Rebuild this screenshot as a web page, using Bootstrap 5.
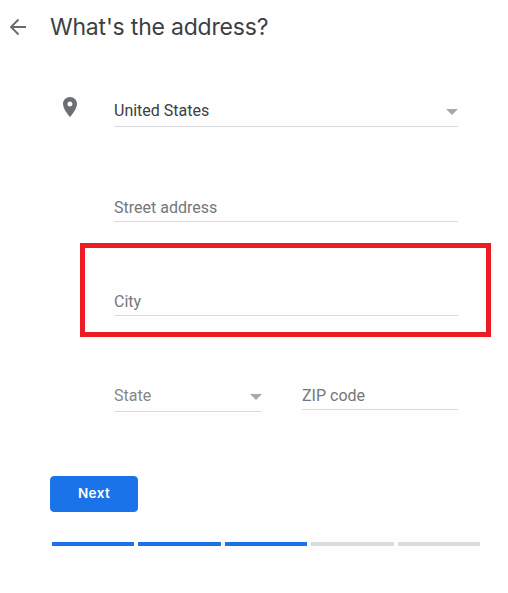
<!DOCTYPE html>
<html lang="en">

<head>
  <meta charset="UTF-8" />
  <title>What's the address?</title>
  <meta name="viewport" content="width=device-width, initial-scale=1" />
  <link href="https://cdn.jsdelivr.net/npm/bootstrap@5.3.0/dist/css/bootstrap.min.css" rel="stylesheet" />

  <style>
    body {
      background-color: #fefefe;
      font-family: Roboto, sans-serif;
      font-size: 16px;
      color: #3c4043;
    }

    .page-header {
      height: 54px;
      padding-left: 6px;
      gap: 20px;
    }

    .page-title {
      font-family: Inter, sans-serif;
      font-size: 23px;
      font-weight: 400;
      line-height: 32px;
      letter-spacing: -0.2px;
      color: #3c4043;
    }

    .address {
      padding: 44px 50px 0 58px;
      gap: 32px;
    }

    .pin {
      margin-top: -3px;
    }

    .field {
      padding-top: 1px;
      border-bottom: 1px solid #dadce0;
      line-height: 24px;
      color: #75777b;
    }

    .text-field {
      padding-bottom: 1px;
      cursor: text;
    }

    .select-field {
      padding-bottom: 3px;
      cursor: pointer;
    }

    .chosen {
      color: #3c4043;
    }

    .unset {
      color: #85878a;
    }

    .arrow-down {
      margin-top: 2px;
      border: 6px solid transparent;
      border-top-color: #a8a8a8;
      border-bottom: 0;
    }

    .street {
      margin-top: 68px;
    }

    .city {
      margin-top: 67px;
    }

    /* red frame around the city field */
    .city::after {
      content: "";
      position: absolute;
      top: -46px;
      right: -33px;
      bottom: -22px;
      left: -34px;
      border: 5px solid #ed1c24;
      pointer-events: none;
    }

    .region {
      margin-top: 67px;
      gap: 40px;
    }

    .state {
      width: 148px;
    }

    .next-btn {
      --bs-btn-bg: #1a73e8;
      --bs-btn-border-color: #1a73e8;
      --bs-btn-hover-bg: #1967d2;
      width: 88px;
      height: 36px;
      margin: 64px 0 0 50px;
      font-family: Inter, sans-serif;
      font-size: 13.5px;
      font-weight: 600;
      letter-spacing: 0.4px;
      border-radius: 4px;
    }

    .next-btn span {
      display: block;
      padding-bottom: 2px;
    }

    .steps {
      width: 428px;
      margin: 30px 0 0 52px;
    }

    .step {
      height: 4px;
      background-color: #dadce0;
    }

    .step.done {
      background-color: #1a73e8;
    }
  </style>
</head>

<body>

  <header class="page-header d-flex align-items-center">
    <svg width="24" height="24" viewBox="0 0 24 24" fill="none" stroke="#66696d" stroke-width="1.8" role="img" aria-label="Back">
      <path d="M20 12H5.5M12.5 4.5L5 12l7.5 7.5" />
    </svg>
    <h1 class="page-title mb-0">What's the address?</h1>
  </header>

  <main>
    <div class="address d-flex align-items-start">
      <svg class="pin flex-shrink-0" width="24" height="24" viewBox="0 0 24 24" fill="#6b6e72">
        <path fill-rule="evenodd" d="M12 2C8.13 2 5 5.13 5 9c0 5.25 7 13 7 13s7-7.75 7-13c0-3.87-3.13-7-7-7zm0 9.5a2.5 2.5 0 1 1 0-5 2.5 2.5 0 0 1 0 5z" />
      </svg>

      <div class="flex-grow-1">
        <div class="field select-field chosen d-flex justify-content-between align-items-center" role="button">
          <span>United States</span>
          <span class="arrow-down"></span>
        </div>
        <div class="field text-field street">Street address</div>
        <div class="field text-field city position-relative">City</div>
        <div class="region d-flex align-items-start">
          <div class="field select-field state unset d-flex justify-content-between align-items-center" role="button">
            <span>State</span>
            <span class="arrow-down"></span>
          </div>
          <div class="field text-field flex-grow-1">ZIP code</div>
        </div>
      </div>
    </div>

    <button type="button" class="next-btn btn btn-primary d-block p-0"><span>Next</span></button>

    <div class="steps d-flex gap-1">
      <div class="step done flex-fill"></div>
      <div class="step done flex-fill"></div>
      <div class="step done flex-fill"></div>
      <div class="step flex-fill"></div>
      <div class="step flex-fill"></div>
    </div>
  </main>

  <script src="https://cdn.jsdelivr.net/npm/bootstrap@5.3.0/dist/js/bootstrap.bundle.min.js"></script>
</body>

</html>
